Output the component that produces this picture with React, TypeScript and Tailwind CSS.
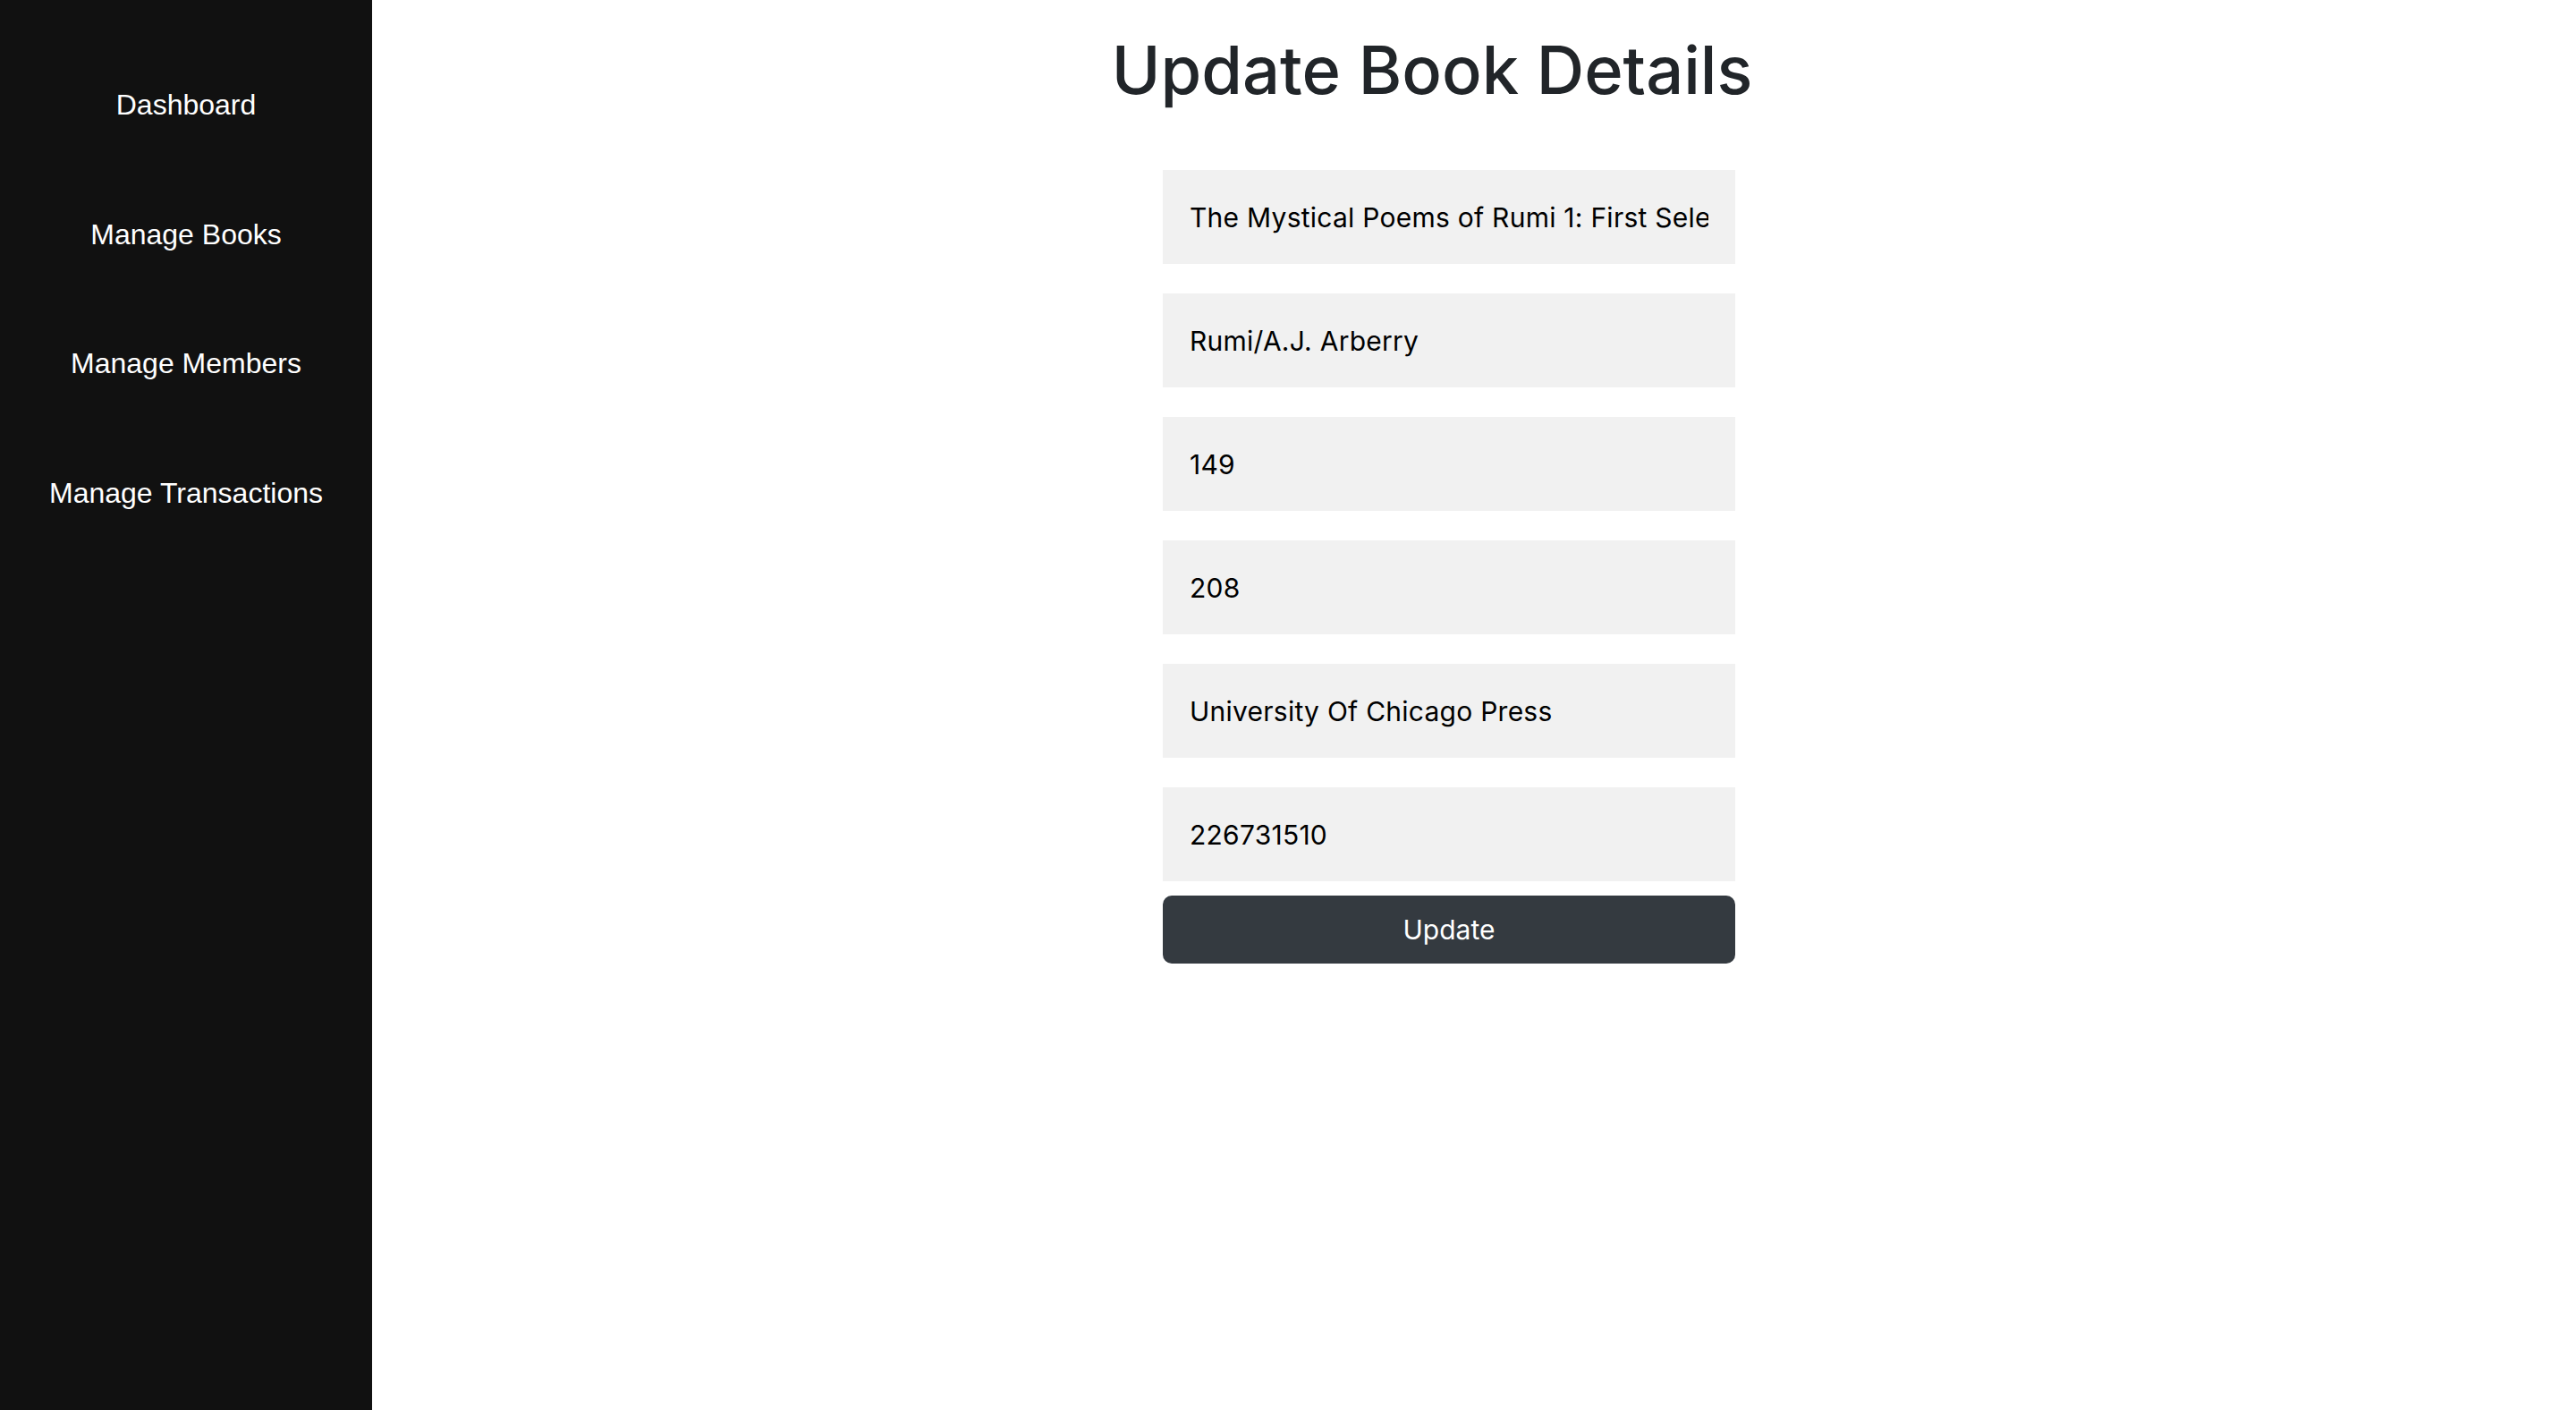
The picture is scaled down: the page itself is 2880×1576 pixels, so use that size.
import { useState } from "react";

const navItems = ["Dashboard", "Manage Books", "Manage Members", "Manage Transactions"]

interface BookForm {
  title: string
  authors: string
  bookId: string
  pages: string
  publisher: string
  isbn: string
}

function Sidebar() {
  return (
    <aside className="w-[416px] shrink-0 bg-[#111111] pt-[45px]">
      <ul className="flex flex-col">
        {navItems.map(item => {
          return (
            <li key={item} className="h-[144.5px] flex items-center justify-center">
              <a href="#" className="text-white text-[32px] font-['Liberation_Sans',Arial,sans-serif]">{item}</a>
            </li>
          )
        })}
      </ul>
    </aside>
  )
}

export default function App() {
  const [book, setBook] = useState<BookForm>({
    title: "The Mystical Poems of Rumi 1: First Selection, Poems 1-200",
    authors: "Rumi/A.J. Arberry",
    bookId: "149",
    pages: "208",
    publisher: "University Of Chicago Press",
    isbn: "226731510",
  })

  const fields: (keyof BookForm)[] = ["title", "authors", "bookId", "pages", "publisher", "isbn"]

  return (
    <div className="flex min-h-screen bg-white font-[Inter,sans-serif]">
      <Sidebar />
      <main className="flex-1 flex flex-col items-center pt-[41px]">
        <h1 className="mr-[94px] text-[74px] leading-none font-medium text-[#212529]">Update Book Details</h1>
        <form className="mr-[56px] mt-[75px] w-[640px] flex flex-col" onSubmit={e => e.preventDefault()}>
          <div className="flex flex-col gap-[33px]">
            {fields.map(field => {
              return (
                <input
                  key={field}
                  type="text"
                  value={book[field]}
                  onChange={e => setBook({ ...book, [field]: e.target.value })}
                  className="h-[105px] w-full bg-[#f1f1f1] px-[30px] text-[30px] tracking-[0.25px] text-black outline-none border-0"
                />
              )
            })}
          </div>
          <button type="submit" className="mt-[16px] h-[76px] w-full rounded-[10px] bg-[#343a40] text-white text-[30px]">
            Update
          </button>
        </form>
      </main>
    </div>
  )
}
